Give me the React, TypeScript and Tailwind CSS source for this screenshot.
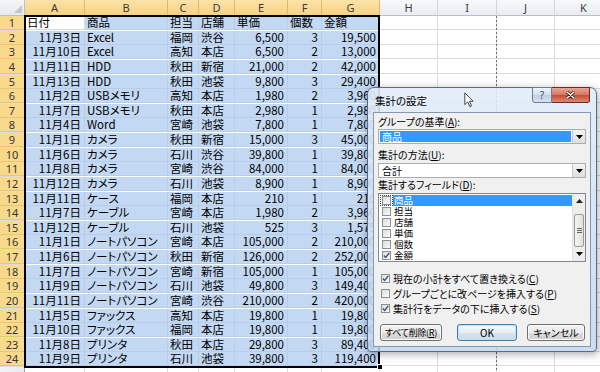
import React from "react";

const GRID =
  "grid grid-cols-[25px_60px_83px_31px_36px_53px_34px_58px_58px_59px_58px_58px]";

const rows: string[][] = [
  ["日付", "商品", "担当", "店舗", "単価", "個数", "金額"],
  ["11月3日", "Excel", "福岡", "渋谷", "6,500", "3", "19,500"],
  ["11月10日", "Excel", "高知", "本店", "6,500", "2", "13,000"],
  ["11月11日", "HDD", "秋田", "新宿", "21,000", "2", "42,000"],
  ["11月13日", "HDD", "秋田", "池袋", "9,800", "3", "29,400"],
  ["11月2日", "USBメモリ", "高知", "本店", "1,980", "2", "3,960"],
  ["11月7日", "USBメモリ", "秋田", "本店", "2,980", "1", "2,980"],
  ["11月4日", "Word", "宮崎", "池袋", "7,800", "1", "7,800"],
  ["11月1日", "カメラ", "秋田", "新宿", "15,000", "3", "45,000"],
  ["11月6日", "カメラ", "石川", "渋谷", "39,800", "1", "39,800"],
  ["11月8日", "カメラ", "宮崎", "渋谷", "84,000", "1", "84,000"],
  ["11月12日", "カメラ", "石川", "池袋", "8,900", "1", "8,900"],
  ["11月11日", "ケース", "福岡", "本店", "210", "1", "210"],
  ["11月7日", "ケーブル", "宮崎", "本店", "1,980", "2", "3,960"],
  ["11月12日", "ケーブル", "石川", "池袋", "525", "3", "1,575"],
  ["11月1日", "ノートパソコン", "宮崎", "本店", "105,000", "2", "210,000"],
  ["11月6日", "ノートパソコン", "秋田", "新宿", "126,000", "2", "252,000"],
  ["11月7日", "ノートパソコン", "宮崎", "新宿", "105,000", "1", "105,000"],
  ["11月9日", "ノートパソコン", "石川", "池袋", "49,800", "3", "149,400"],
  ["11月11日", "ノートパソコン", "宮崎", "渋谷", "210,000", "2", "420,000"],
  ["11月5日", "ファックス", "高知", "本店", "19,800", "1", "19,800"],
  ["11月10日", "ファックス", "福岡", "本店", "19,800", "1", "19,800"],
  ["11月8日", "プリンタ", "秋田", "本店", "29,800", "3", "89,400"],
  ["11月9日", "プリンタ", "石川", "池袋", "39,800", "3", "119,400"],
];

const LETTERS = ["A", "B", "C", "D", "E", "F", "G", "H", "I", "J", "K", "L"];

function Check({ checked }: { checked?: boolean }) {
  return (
    <div className="w-[9px] h-[9px] shrink-0 border border-[#8e8f8f] bg-[linear-gradient(135deg,#dcdcdc,#fbfbfb)] flex items-center justify-center">
      {checked && (
        <svg width="7" height="7" viewBox="0 0 7 7">
          <path d="M0.8 3.6 L2.7 5.5 L6.3 0.9" fill="none" stroke="#3f5284" strokeWidth="1.4" />
        </svg>
      )}
    </div>
  );
}

function DownArrow() {
  return (
    <svg width="7" height="4" viewBox="0 0 7 4">
      <path d="M0 0 L7 0 L3.5 4 Z" fill="#000" />
    </svg>
  );
}

function Combo({ text, selected }: { text: string; selected?: boolean }) {
  return (
    <div className="h-[15px] flex border border-[#abadb3] bg-white">
      <div className="flex-1 p-[1px]">
        <div
          className={
            selected
              ? "h-full bg-[#3399ff] text-white leading-[11px] pl-[2px]"
              : "h-full text-black leading-[11px] pl-[2px]"
          }
        >
          {text}
        </div>
      </div>
      <div className="w-[13px] border-l border-[#c9c9c9] bg-[linear-gradient(#f4f4f4,#dedede)] flex items-center justify-center">
        <DownArrow />
      </div>
    </div>
  );
}

function Btn({ children, w, ok }: { children: React.ReactNode; w: string; ok?: boolean }) {
  return (
    <div
      className={
        (ok
          ? "border-[#3c7fb1] shadow-[inset_0_0_0_1px_#bfe4f8] bg-[linear-gradient(#f4f9fc,#e6eef4_50%,#d7e3ec_51%,#cfdde8)] "
          : "border-[#707070] shadow-[inset_0_0_0_1px_#fcfcfc] bg-[linear-gradient(#f2f2f2,#ebebeb_50%,#dddddd_51%,#cfcfcf)] ") +
        w +
        " h-full rounded-[3px] border flex items-center justify-center whitespace-nowrap leading-[13px] text-black"
      }
    >
      {children}
    </div>
  );
}

export default function App() {
  const fields = ["商品", "担当", "店舗", "単価", "個数", "金額"];
  return (
    <div className="relative w-[600px] h-[372px] overflow-hidden bg-white font-['Noto_Sans_CJK_JP','Noto_Sans',sans-serif] [font-feature-settings:'palt']">
      {/* column headers */}
      <div className={`${GRID} h-[16px]`}>
        <div className="relative bg-[linear-gradient(#f5f6f8,#e6e9ed)] border-r border-b border-[#b8bec6]">
          <svg className="absolute right-[2px] bottom-[2px]" width="8" height="8" viewBox="0 0 8 8">
            <path d="M8 0 L8 8 L0 8 Z" fill="#c3c7cc" />
          </svg>
        </div>
        {LETTERS.map((l, i) => (
          <div
            key={l}
            className={
              (i < 7
                ? "bg-[linear-gradient(#fbe3a8,#f7d283)] border-r border-r-[#e2b867] border-b border-b-[#c9a04e] "
                : "bg-[linear-gradient(#f7f8fa,#e9ecf0)] border-r border-r-[#d2d6db] border-b border-b-[#b8bec6] ") +
              "flex items-center justify-center text-[11px] leading-[15px] text-[#3a3a3a] font-['Noto_Sans',sans-serif]"
            }
          >
            {l}
          </div>
        ))}
      </div>

      {/* rows */}
      {[...rows, null].map((r, ri) => (
        <div key={ri} className={`${GRID} h-[14.625px]`}>
          <div
            className={
              (r
                ? "bg-[#f9d98c] border-b border-b-[#eac574] "
                : "bg-[linear-gradient(90deg,#f1f3f5,#e8ebee)] border-b border-b-[#d2d6db] ") +
              "border-r border-r-[#9aa0a7] flex items-center justify-center text-[11px] leading-[13px] text-[#353535] font-['Noto_Sans',sans-serif]"
            }
          >
            {r ? ri + 1 : ""}
          </div>
          {LETTERS.map((l, ci) => {
            const sel = r !== null && ci < 7;
            const text = r && ci < 7 ? r[ci] : "";
            const right = ri > 0 && (ci === 0 || ci >= 4);
            let cls =
              "flex items-center whitespace-nowrap border-r border-b text-[11.5px] leading-[13px] text-black ";
            if (sel) {
              cls += ri === 0 && ci === 0 ? "bg-white border-[#d5dbe2] " : "bg-[#c3d8f2] border-[#b7cdea] ";
            } else {
              cls += "bg-white border-[#dadcdd] ";
            }
            cls += right ? "justify-end pr-[3px]" : "pl-[2px]";
            return (
              <div key={l} className={cls}>
                {text}
              </div>
            );
          })}
        </div>
      ))}

      {/* page break dashed line */}
      <div className="absolute left-[496px] top-[16px] w-[1px] h-[356px] bg-[repeating-linear-gradient(to_bottom,#6f6f6f_0px,#6f6f6f_2px,transparent_2px,transparent_4px)]" />

      {/* selection border */}
      <div className="absolute left-[24px] top-[15px] w-[356px] h-[353px] border-2 border-black pointer-events-none" />
      <div className="absolute left-[377px] top-[364px] w-[6px] h-[6px] bg-black border border-white" />

      {/* dialog */}
      <div className="absolute left-[367px] top-[87px] w-[230px] h-[265px] rounded-t-[7px] rounded-b-[4px] border border-[#536d8e] bg-[linear-gradient(180deg,rgba(226,236,248,0.9),rgba(196,215,238,0.86))] shadow-[1px_2px_8px_rgba(0,0,0,0.35)]">
        <div className="relative h-[24px]">
          <div className="absolute left-[7px] top-[6px] text-[10.5px] leading-[13px] text-black">集計の設定</div>
          <div className="absolute right-[6px] top-[-1px] flex">
            <div className="w-[20px] h-[16px] rounded-bl-[3px] border border-[#6c7e96] bg-[linear-gradient(#eff4fa,#d3deeb_50%,#bfcee2_51%,#d8e3f0)] flex items-center justify-center text-[10px] leading-[14px] text-[#34465f] font-['Noto_Sans',sans-serif]">
              ?
            </div>
            <div className="w-[38px] h-[16px] rounded-br-[3px] border border-l-0 border-[#6b2b20] bg-[linear-gradient(#eaa597,#d67562_50%,#c54b33_51%,#d88a70)] flex items-center justify-center">
              <svg width="9" height="8" viewBox="0 0 9 8">
                <path d="M1 1 L8 7 M8 1 L1 7" stroke="#4a1a12" strokeWidth="3" strokeLinecap="round" />
                <path d="M1 1 L8 7 M8 1 L1 7" stroke="#ffffff" strokeWidth="1.6" strokeLinecap="round" />
              </svg>
            </div>
          </div>
        </div>
        <div className="mx-[5px] h-[235px] border border-[#8598b3] bg-[#f0f0f0] px-[4px] text-[10px] text-black">
          <div className="mt-[2px] h-[13px] leading-[13px]">
            グループの基準(<span className="underline">A</span>):
          </div>
          <div className="mt-[1px]">
            <Combo text="商品" selected />
          </div>
          <div className="mt-[4px] h-[13px] leading-[13px]">
            集計の方法(<span className="underline">U</span>):
          </div>
          <div className="mt-[2px]">
            <Combo text="合計" />
          </div>
          <div className="h-[13px] leading-[13px]">
            集計するフィールド(<span className="underline">D</span>):
          </div>
          <div className="mt-[2px] h-[69px] border border-[#828790] bg-white flex">
            <div className="flex-1 pt-[1px]">
              {fields.map((f, i) => (
                <div key={f} className="flex h-[11px] items-center">
                  <div
                    className={
                      (i === 0 ? "border border-dotted border-[#444] " : "border border-transparent ") +
                      "ml-[1px] h-[11px] w-[13px] flex items-center justify-center"
                    }
                  >
                    <Check checked={i === 5} />
                  </div>
                  <div
                    className={
                      (i === 0 ? "bg-[#3399ff] text-white " : "") +
                      "flex-1 h-full pl-[1px] text-[9.5px] leading-[11px]"
                    }
                  >
                    {f}
                  </div>
                </div>
              ))}
            </div>
            <div className="w-[13px] bg-[#eeeeee] border-l border-[#e3e3e3] flex flex-col">
              <div className="h-[13px] flex items-center justify-center">
                <svg width="7" height="4" viewBox="0 0 7 4">
                  <path d="M0 4 L7 4 L3.5 0 Z" fill="#222" />
                </svg>
              </div>
              <div className="mt-[7px] mx-[1px] h-[33px] rounded-[2px] border border-[#9a9a9a] bg-[linear-gradient(90deg,#f4f4f4,#e0e0e0)] flex flex-col items-center justify-center gap-[1px]">
                <div className="w-[5px] h-[1px] bg-[#666]" />
                <div className="w-[5px] h-[1px] bg-[#666]" />
                <div className="w-[5px] h-[1px] bg-[#666]" />
              </div>
              <div className="flex-1 flex items-center justify-center">
                <DownArrow />
              </div>
            </div>
          </div>
          <div className="mt-[9px] flex flex-col">
            <div className="h-[15px] flex items-center">
              <div className="ml-[3px]">
                <Check checked />
              </div>
              <div className="ml-[3px] leading-[13px]">
                現在の小計をすべて置き換える(<span className="underline">C</span>)
              </div>
            </div>
            <div className="h-[15px] flex items-center">
              <div className="ml-[3px]">
                <Check />
              </div>
              <div className="ml-[3px] leading-[13px]">
                グループごとに改ページを挿入する(<span className="underline">P</span>)
              </div>
            </div>
            <div className="h-[15px] flex items-center">
              <div className="ml-[3px]">
                <Check checked />
              </div>
              <div className="ml-[3px] leading-[13px]">
                集計行をデータの下に挿入する(<span className="underline">S</span>)
              </div>
            </div>
          </div>
          <div className="mt-[8px] h-[17px] flex">
            <div className="ml-[2px] h-full">
              <Btn w="w-[62px] text-[9px] tracking-[-0.3px]">
                すべて削除(<span className="underline">R</span>)
              </Btn>
            </div>
            <div className="ml-[15px] h-full">
              <Btn w="w-[60px]" ok>
                OK
              </Btn>
            </div>
            <div className="ml-[10px] h-full">
              <Btn w="w-[58px]">キャンセル</Btn>
            </div>
          </div>
        </div>
      </div>

      {/* mouse cursor */}
      <svg className="absolute left-[464px] top-[92px]" width="10" height="16" viewBox="0 0 12 19">
        <path
          d="M1 1 L1 15 L4.5 11.8 L7 17.5 L9 16.6 L6.6 11 L11 11 Z"
          fill="white"
          stroke="#222"
          strokeWidth="1"
          strokeLinejoin="round"
        />
      </svg>
    </div>
  );
}
